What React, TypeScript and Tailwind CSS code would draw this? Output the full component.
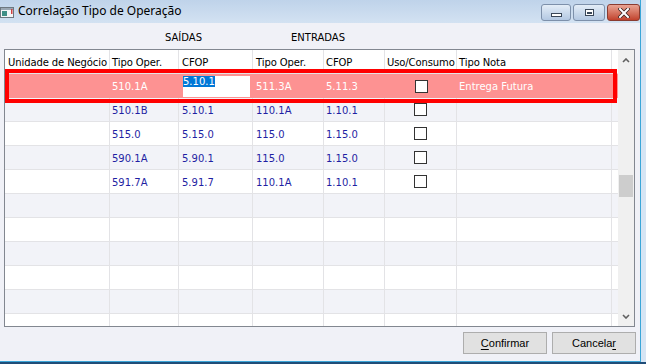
import React from "react";

type Row = {
  unidade?: string;
  sOper?: string;
  sCfop?: string;
  eOper?: string;
  eCfop?: string;
  uso?: boolean;
  nota?: string;
  selected?: boolean;
};

const rows: Row[] = [
  { sOper: "510.1A", sCfop: "5.10.1", eOper: "511.3A", eCfop: "5.11.3", uso: true, nota: "Entrega Futura", selected: true },
  { sOper: "510.1B", sCfop: "5.10.1", eOper: "110.1A", eCfop: "1.10.1", uso: true },
  { sOper: "515.0", sCfop: "5.15.0", eOper: "115.0", eCfop: "1.15.0", uso: true },
  { sOper: "590.1A", sCfop: "5.90.1", eOper: "115.0", eCfop: "1.15.0", uso: true },
  { sOper: "591.7A", sCfop: "5.91.7", eOper: "110.1A", eCfop: "1.10.1", uso: true },
  {},
  {},
  {},
  {},
  {},
  {},
];

// column boxes, widths include the 1px right line
const colClass = [
  "w-[105px] pl-[3px]",
  "w-[69px] pl-[2px]",
  "w-[74px] pl-[3px]",
  "w-[71px] pl-[3px]",
  "w-[61px] pl-[2px]",
  "w-[72px] pl-[2px]",
  "w-[155px] pl-[2px]",
];

const headers = ["Unidade de Negócio", "Tipo Oper.", "CFOP", "Tipo Oper.", "CFOP", "Uso/Consumo", "Tipo Nota"];

function Checkbox() {
  return <div className="w-[13px] h-[13px] border border-[#333333] bg-white" />;
}

function TitleIcon() {
  return (
    <svg width="14" height="11" viewBox="0 0 14 11">
      <rect x="0.5" y="0.5" width="13" height="10" fill="#f4f6f8" stroke="#6d7780" />
      <rect x="1" y="1" width="12" height="2" fill="#9aa7b3" />
      <rect x="2" y="4" width="5" height="5" fill="#3f8f86" />
      <rect x="11" y="2" width="1.5" height="5" fill="#d04040" />
    </svg>
  );
}

function GridRow({ row, index }: { row: Row; index: number }) {
  const zebra = index % 2 === 1 ? "bg-[#f2f3f8]" : "bg-white";
  if (row.selected) {
    return (
      <div className="flex h-[24px] bg-[#fd9292] text-white shrink-0">
        <div className={`${colClass[0]} flex items-center pt-[1px]`}>{row.unidade}</div>
        <div className={`${colClass[1]} flex items-center pt-[1px]`}>{row.sOper}</div>
        <div className="w-[74px] pl-[4px] pr-[3px] pt-[2px] pb-[1px]">
          <div className="h-full bg-white text-left leading-[12px]">
            <span className="bg-[#0078d7] text-white">{row.sCfop}</span>
          </div>
        </div>
        <div className={`${colClass[3]} flex items-center pt-[1px]`}>{row.eOper}</div>
        <div className={`${colClass[4]} flex items-center pt-[1px]`}>{row.eCfop}</div>
        <div className={`${colClass[5]} flex items-center justify-center pl-0`}>
          <div className="ml-[-2px]">
            <Checkbox />
          </div>
        </div>
        <div className={`${colClass[6]} flex items-center pt-[1px]`}>{row.nota}</div>
        <div className="flex-1" />
      </div>
    );
  }
  const cells = [row.unidade, row.sOper, row.sCfop, row.eOper, row.eCfop];
  return (
    <div className={`flex h-[24px] border-b border-[#e3e3e6] text-[#1f1fa3] shrink-0 ${zebra}`}>
      {cells.map((c, i) => (
        <div key={i} className={`${colClass[i]} border-r border-[#e3e3e6] flex items-center pt-[1px]`}>
          {c}
        </div>
      ))}
      <div className={`${colClass[5]} border-r border-[#e3e3e6] flex items-center justify-center pl-0`}>
        {row.uso && (
          <div className="ml-[-2px]">
            <Checkbox />
          </div>
        )}
      </div>
      <div className={`${colClass[6]} border-r border-[#e3e3e6] flex items-center`}>{row.nota}</div>
      <div className="flex-1" />
    </div>
  );
}

function Chevron({ down }: { down?: boolean }) {
  return (
    <svg width="8" height="5" viewBox="0 0 8 5">
      <path d={down ? "M1 1 L4 4 L7 1" : "M1 4 L4 1 L7 4"} fill="none" stroke="#606060" strokeWidth="1.6" />
    </svg>
  );
}

export default function App() {
  return (
    <div className="w-[646px] h-[364px] overflow-hidden bg-[#1f4d78] flex flex-col font-['DejaVu_Sans',sans-serif] text-[10px] text-black">
      <div className="flex h-[362px] shrink-0">
        <div className="relative w-[641px] h-[362px] border-r border-b border-[#3aa6d8] flex flex-col bg-[#f0f1f7]">
          {/* title bar */}
          <div className="h-[23px] shrink-0 flex items-center bg-gradient-to-b from-[#bfd3ea] to-[#d3e2f2]">
            <div className="mt-[1px]">
              <TitleIcon />
            </div>
            <span className="ml-[4px] font-['Noto_Sans',sans-serif] text-[12px] leading-none mt-[-1px]">
              Correlação Tipo de Operação
            </span>
            <div className="ml-auto flex gap-[2px] self-start mt-[4px]">
              <div className="w-[30px] h-[17px] rounded-[3px] border border-[#7d90aa] bg-gradient-to-b from-[#e4edf7] to-[#b3c8e2] flex items-center justify-center">
                <div className="w-[11px] h-[4px] mt-[5px] border border-[#3a4758] bg-white" />
              </div>
              <div className="w-[32px] h-[17px] rounded-[3px] border border-[#7d90aa] bg-gradient-to-b from-[#e4edf7] to-[#b3c8e2] flex items-center justify-center">
                <div className="w-[9px] h-[7px] border border-[#3a4758] bg-white flex items-center justify-center">
                  <div className="w-[5px] h-[2px] border border-[#3a4758]" />
                </div>
              </div>
              <div className="w-[33px] h-[17px] rounded-[3px] border border-[#8a3b30] bg-gradient-to-b from-[#e8a393] to-[#c1412c] flex items-center justify-center">
                <svg width="12" height="10" viewBox="0 0 12 10">
                  <path d="M2 1 L10 9 M10 1 L2 9" stroke="#3b2320" strokeWidth="3.6" strokeLinecap="square" />
                  <path d="M2 1 L10 9 M10 1 L2 9" stroke="#ffffff" strokeWidth="2" strokeLinecap="square" />
                </svg>
              </div>
            </div>
          </div>

          {/* client */}
          <div className="flex-1 flex flex-col px-[4px]">
            <div className="h-[26px] flex items-center shrink-0">
              <span className="ml-[161px] w-[126px] mt-[3px]">SAÍDAS</span>
              <span className="mt-[3px]">ENTRADAS</span>
            </div>

            <div className="w-[631px] h-[278px] border border-[#828790] flex shrink-0">
              <div className="w-[613px] bg-white flex flex-col overflow-hidden">
                <div className="flex h-[24px] border-b border-[#e3e3e6] shrink-0">
                  {headers.map((h, i) => (
                    <div key={i} className={`${colClass[i]} border-r border-[#e3e3e6] flex items-center whitespace-nowrap overflow-hidden tracking-[-0.1px] pt-[1px]`}>
                      {h}
                    </div>
                  ))}
                  <div className="flex-1" />
                </div>
                {rows.map((r, i) => (
                  <GridRow key={i} row={r} index={i} />
                ))}
              </div>
              <div className="flex-1 bg-[#f0f0f0] flex flex-col items-center">
                <div className="h-[21px] flex items-center justify-center">
                  <Chevron />
                </div>
                <div className="w-[14px] h-[22px] bg-[#cdcdcd] mt-[104px]" />
                <div className="flex-1" />
                <div className="h-[20px] flex items-center justify-center">
                  <Chevron down />
                </div>
              </div>
            </div>

            <div className="flex justify-end gap-[5px] mt-[5px] font-['Liberation_Sans',sans-serif] text-[11px]">
              <button className="w-[84px] h-[22px] bg-[#e1e1e1] border border-[#adadad] flex items-center justify-center">
                <span>
                  <span className="underline underline-offset-2">C</span>onfirmar
                </span>
              </button>
              <button className="w-[84px] h-[22px] bg-[#e1e1e1] border border-[#adadad] flex items-center justify-center">
                <span>
                  Cancela<span className="underline underline-offset-2">r</span>
                </span>
              </button>
            </div>
          </div>

          {/* red highlight frame drawn over the selected row */}
          <div className="absolute left-[5px] top-[69px] w-[612px] h-[34px] border-[4px] border-[#ff0000] pointer-events-none" />
        </div>
        <div className="flex-1 bg-[#d6e5f4]" />
      </div>
    </div>
  );
}
